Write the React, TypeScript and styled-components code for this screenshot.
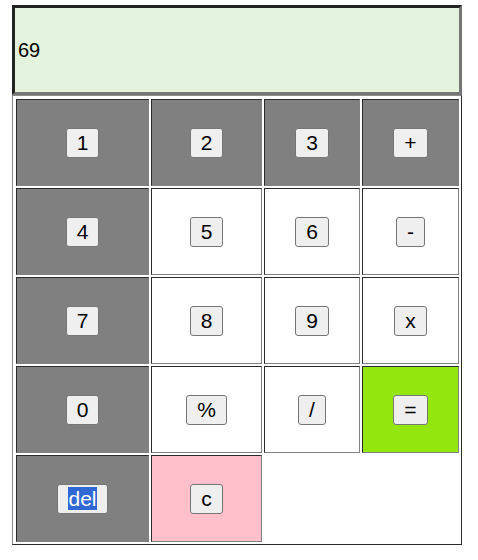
import React from 'react'
import styled, { createGlobalStyle } from 'styled-components'

const GlobalStyle = createGlobalStyle`
  body {
    margin: 0;
    background: #ffffff;
    font-family: 'Liberation Sans', Arial, sans-serif;
  }
`

const Wrapper = styled.div`
  width: 450px;
  padding: 5px 0 0 12px;
  display: flex;
  flex-direction: column;
`

const Display = styled.div`
  box-sizing: border-box;
  height: 90px;
  display: flex;
  align-items: center;
  padding: 0 3px;
  background: #e3f3dd;
  border-style: solid;
  border-width: 3px;
  border-color: #222222 #767676 #767676 #222222;
  font-size: 20px;
  color: #000;
`

const Keypad = styled.div`
  box-sizing: border-box;
  display: grid;
  grid-template-columns: 133px 111px 96px 97px;
  grid-auto-rows: 87px;
  gap: 2px;
  padding: 3px 2px 2px 3px;
  border: 1px solid;
  border-color: #8a8a8a #2a2a2a #2a2a2a #8a8a8a;
`

type Tone = 'gray' | 'white' | 'green' | 'pink'

const toneColors: Record<Tone, string> = {
  gray: '#808080',
  white: '#ffffff',
  green: '#93e70e',
  pink: '#ffc0cb',
}

const Cell = styled.div<{ $tone: Tone }>`
  box-sizing: border-box;
  display: flex;
  align-items: center;
  justify-content: center;
  background: ${({ $tone }) => toneColors[$tone]};
  border: 1px solid;
  border-color: #2a2a2a #808080 #808080 #2a2a2a;
`

const Key = styled.button`
  font-family: 'Liberation Sans', Arial, sans-serif;
  font-size: 21px;
  line-height: 24px;
  color: #000;
  background: #efefef;
  border: 1px solid #767676;
  border-radius: 3px;
  padding: 2px 10px;
  cursor: pointer;
`

const Selected = styled.span`
  background: #3169d4;
  color: #ffffff;
`

const keys: { label: string; tone: Tone }[] = [
  { label: '1', tone: 'gray' },
  { label: '2', tone: 'gray' },
  { label: '3', tone: 'gray' },
  { label: '+', tone: 'gray' },
  { label: '4', tone: 'gray' },
  { label: '5', tone: 'white' },
  { label: '6', tone: 'white' },
  { label: '-', tone: 'white' },
  { label: '7', tone: 'gray' },
  { label: '8', tone: 'white' },
  { label: '9', tone: 'white' },
  { label: 'x', tone: 'white' },
  { label: '0', tone: 'gray' },
  { label: '%', tone: 'white' },
  { label: '/', tone: 'white' },
  { label: '=', tone: 'green' },
  { label: 'del', tone: 'gray' },
  { label: 'c', tone: 'pink' },
]

const App: React.FC = () => {
  return (
    <>
      <GlobalStyle />
      <Wrapper>
        <Display>69</Display>
        <Keypad>
          {keys.map((k) => (
            <Cell key={k.label} $tone={k.tone}>
              <Key>{k.label === 'del' ? <Selected>del</Selected> : k.label}</Key>
            </Cell>
          ))}
        </Keypad>
      </Wrapper>
    </>
  )
}

export default App
